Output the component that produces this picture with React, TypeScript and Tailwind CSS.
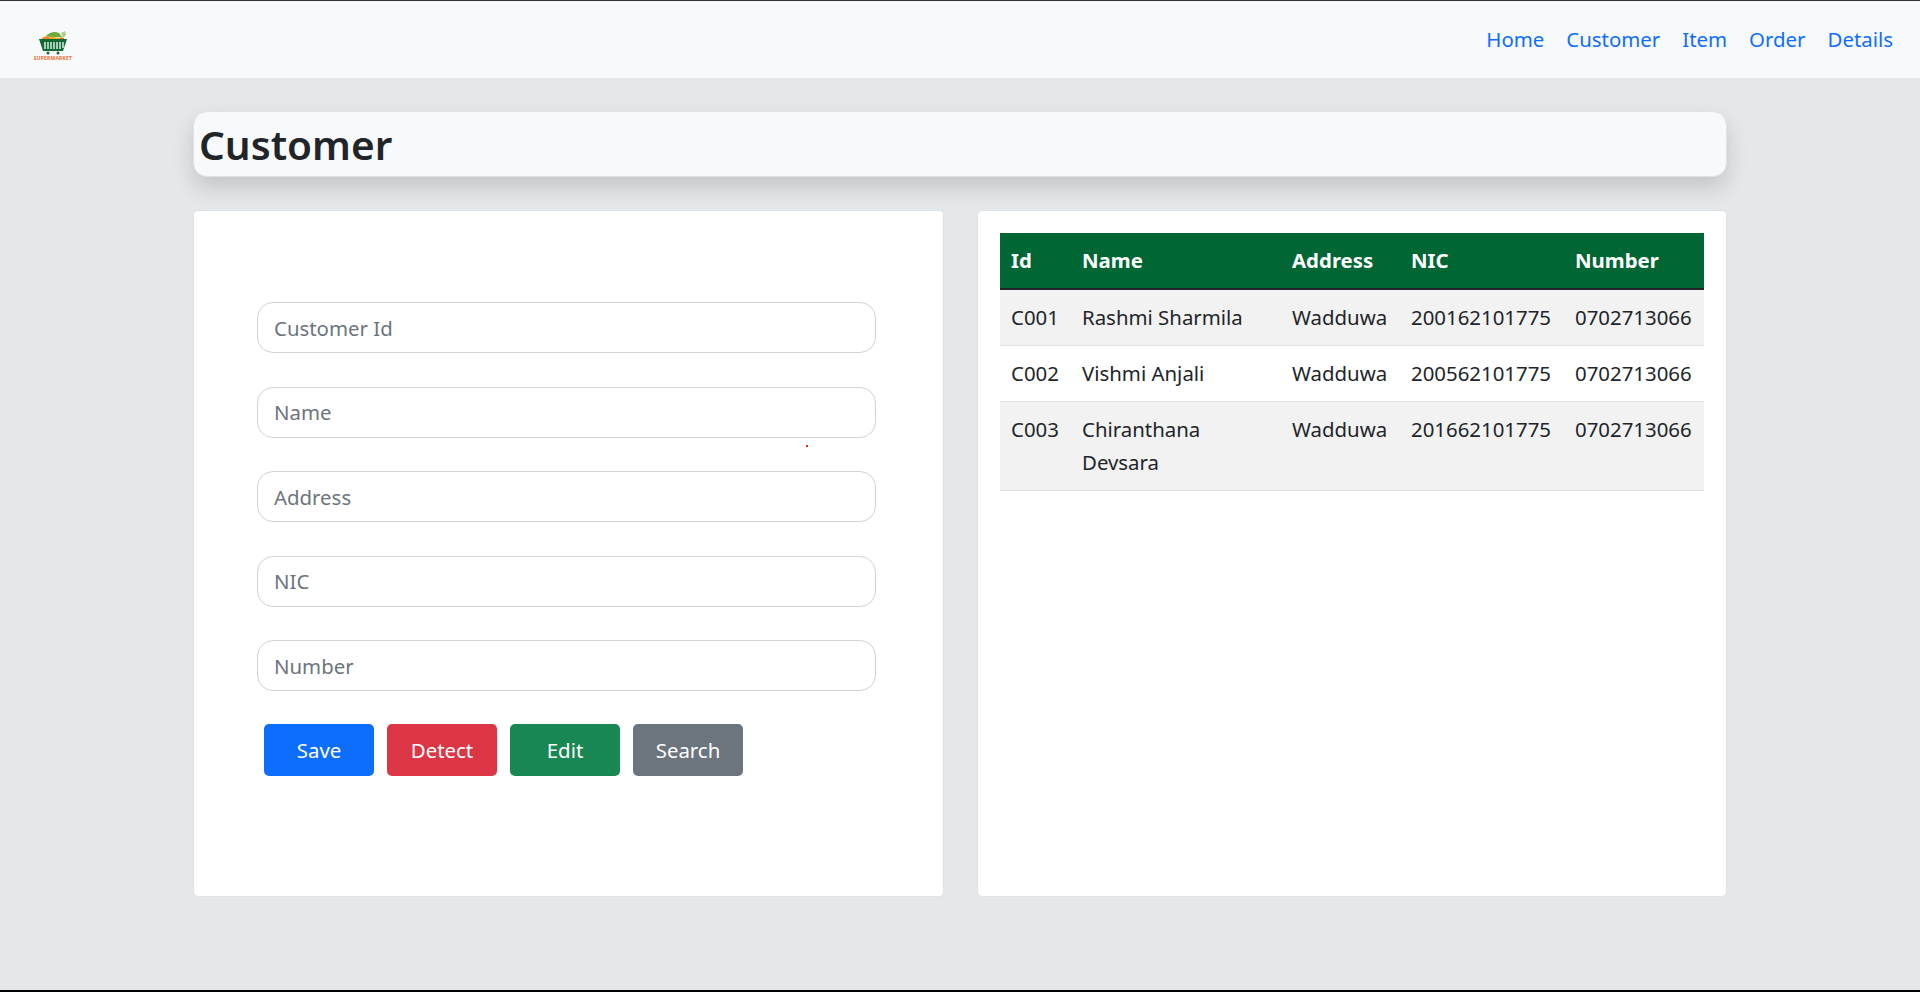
const customers = [
  { id: "C001", name: "Rashmi Sharmila", address: "Wadduwa", nic: "200162101775", number: "0702713066" },
  { id: "C002", name: "Vishmi Anjali", address: "Wadduwa", nic: "200562101775", number: "0702713066" },
  { id: "C003", name: "Chiranthana Devsara", address: "Wadduwa", nic: "201662101775", number: "0702713066" },
];

const links = ["Home", "Customer", "Item", "Order", "Details"];
const fields = ["Customer Id", "Name", "Address", "NIC", "Number"];
const buttons = [
  { label: "Save", color: "bg-[#0d6efd]" },
  { label: "Detect", color: "bg-[#dc3545]" },
  { label: "Edit", color: "bg-[#198754]" },
  { label: "Search", color: "bg-[#6c757d]" },
];

function Logo() {
  return (
    <div className="mt-[11px] flex w-[40px] flex-col items-center">
      <svg width="30" height="25" viewBox="0 0 30 25">
        <path d="M4 8 Q8 5 11 7 L14 10 L4 10 Z" fill="#ee8a1d" />
        <path d="M8 6 Q14 0 21 3 L24 7 L12 7 Z" fill="#6fae3c" />
        <path d="M13 6 Q18 9 24 7 L27 10 L11 10 Z" fill="#f0a81e" />
        <path d="M23 3 L27 1 L28 5 L25 8 Z" fill="#a9d08a" />
        <path d="M22 8 L26 8 L26 10 L21 10 Z" fill="#e9702a" />
        <path d="M1 9 H29 L25 21 H5 Z" fill="#0f6a35" />
        <path
          d="M7 12 V19 M10 12 V19 M13 12 V19 M16 12 V19 M19 12 V19 M22 12 V19 M25 12 V18"
          stroke="#fff"
          strokeWidth="1.3"
        />
        <circle cx="10" cy="23" r="1.5" fill="#0f6a35" />
        <circle cx="20" cy="23" r="1.5" fill="#0f6a35" />
      </svg>
      <span className="mt-[1px] text-[5px] leading-[5px] font-bold tracking-[0.2px] text-[#ee6a2c]">SUPERMARKET</span>
    </div>
  );
}

export default function App() {
  return (
    <div className="flex h-[992px] flex-col overflow-hidden border-t border-b-2 border-t-[#333] border-b-black bg-[#e5e8eb] font-['Noto_Sans',sans-serif] text-[20.4px] leading-[33px] text-[#212529]">
      <nav className="flex h-[77px] shrink-0 items-center justify-between bg-[#f8f9fa] pr-[16px] pl-[33px]">
        <Logo />
        <div className="flex">
          {links.map((link) => (
            <a key={link} href="#" className="px-[11px] text-[#0d6efd]">
              {link}
            </a>
          ))}
        </div>
      </nav>

      <main className="mx-auto w-[1534px] pt-[33px]">
        <div className="h-[66px] rounded-[14px] border border-[#dfe2e5] bg-[#f8f9fa] pl-[5px] shadow-[0_11px_22px_rgba(0,0,0,0.15)]">
          <h1 className="text-[40.5px] leading-[65px] font-semibold">Customer</h1>
        </div>

        <div className="mt-[33px] flex gap-[33px]">
          <section className="relative h-[687px] w-[751px] rounded-[5px] border border-[#dfe2e5] bg-white pt-[91px] pl-[63px]">
            <form className="flex flex-col gap-[33.5px]">
              {fields.map((field) => (
                <input
                  key={field}
                  placeholder={field}
                  className="h-[51px] w-[619px] rounded-[16px] border border-[#ced4da] px-[16px] text-[20.4px] placeholder:text-[#6c757d]"
                />
              ))}
            </form>
            <div className="mt-[33px] ml-[7px] flex gap-[13px]">
              {buttons.map((button) => (
                <button
                  key={button.label}
                  type="button"
                  className={`h-[52px] w-[110px] rounded-[5px] text-white ${button.color}`}
                >
                  {button.label}
                </button>
              ))}
            </div>
            <span className="absolute top-[234px] left-[612px] h-[2px] w-[2px] bg-[#e22]" />
          </section>

          <section className="h-[687px] w-[750px] rounded-[5px] border border-[#dfe2e5] bg-white p-[22px]">
            <table className="w-[704px] table-fixed border-collapse text-left">
              <colgroup>
                <col className="w-[71px]" />
                <col className="w-[210px]" />
                <col className="w-[119px]" />
                <col className="w-[164px]" />
                <col className="w-[140px]" />
              </colgroup>
              <thead>
                <tr className="h-[56px] border-b-2 border-[#212529] bg-[#006633] text-white">
                  <th className="px-[11px] font-bold">Id</th>
                  <th className="px-[11px] font-bold">Name</th>
                  <th className="px-[11px] font-bold">Address</th>
                  <th className="px-[11px] font-bold">NIC</th>
                  <th className="px-[11px] font-bold">Number</th>
                </tr>
              </thead>
              <tbody>
                {customers.map((customer, i) => (
                  <tr key={customer.id} className={`border-b border-[#dee2e6] ${i % 2 === 0 ? "bg-[#f2f2f2]" : "bg-white"}`}>
                    <td className="px-[11px] py-[11px] align-top">{customer.id}</td>
                    <td className="px-[11px] py-[11px] align-top">{customer.name}</td>
                    <td className="px-[11px] py-[11px] align-top">{customer.address}</td>
                    <td className="px-[11px] py-[11px] align-top">{customer.nic}</td>
                    <td className="px-[11px] py-[11px] align-top">{customer.number}</td>
                  </tr>
                ))}
              </tbody>
            </table>
          </section>
        </div>
      </main>
    </div>
  );
}
